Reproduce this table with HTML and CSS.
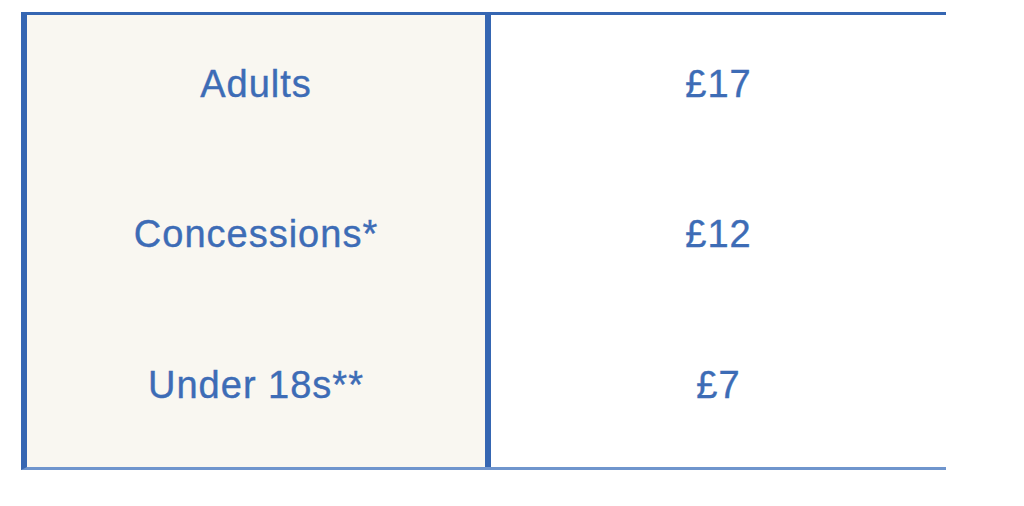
FILE: index.html
```html
<!DOCTYPE html>
<html lang="en">
<head>
<meta charset="utf-8">
<title>Ticket prices</title>
<link rel="stylesheet" href="styles.css">
</head>
<body>
<div class="prices">
  <div class="label">Adults</div>
  <div class="price">£17</div>
  <div class="label">Concessions*</div>
  <div class="price">£12</div>
  <div class="label">Under 18s**</div>
  <div class="price">£7</div>
</div>
</body>
</html>
```

FILE: styles.css
```css
html, body {
  margin: 0;
  padding: 0;
  background: #ffffff;
}

body {
  padding: 12px 0 0 21px;
  font-family: "Liberation Sans", Arial, sans-serif;
}

.prices {
  width: 925px;
  box-sizing: border-box;
  display: grid;
  grid-template-columns: 464px 455px;
  grid-template-rows: repeat(3, 1fr);
  height: 458px;
  border-top: 3px solid #3566b2;
  border-left: 6px solid #3566b2;
  border-bottom: 3px solid #6f95cd;
}

.label,
.price {
  display: flex;
  align-items: center;
  justify-content: center;
  padding-bottom: 12px;
  font-size: 38px;
  letter-spacing: 1px;
  color: #3d6cb6;
  -webkit-text-stroke: 0.4px #3d6cb6;
}

.label {
  background: #f9f7f1;
  border-right: 6px solid #3566b2;
}

.price {
  background: #ffffff;
}
```
